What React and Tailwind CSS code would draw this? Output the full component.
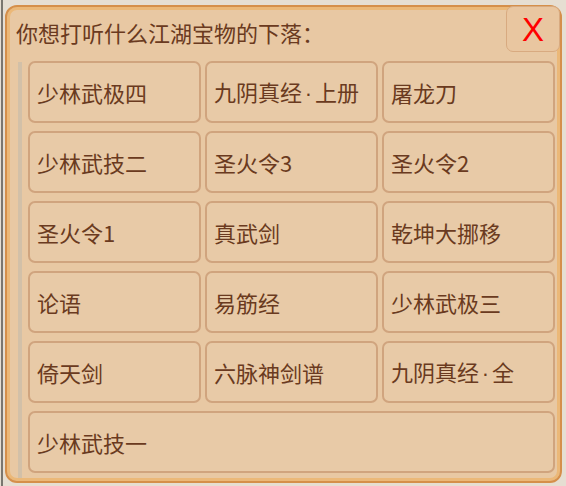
import React from "react";

const items = [
  "少林武极四", ["九阴真经", "上册"], "屠龙刀",
  "少林武技二", "圣火令3", "圣火令2",
  "圣火令1", "真武剑", "乾坤大挪移",
  "论语", "易筋经", "少林武极三",
  "倚天剑", "六脉神剑谱", ["九阴真经", "全"],
];

function Label({ value }) {
  if (!Array.isArray(value)) return value;
  return (
    <>
      {value[0]}
      <span className="inline-block w-[13px] text-center font-['Liberation_Sans',Arial,sans-serif]">
        ·
      </span>
      {value[1]}
    </>
  );
}

function Item({ label, wide }) {
  return (
    <button
      className={
        "h-[62px] rounded-[7px] border-2 border-[#d0a47e] bg-[#e8caa7] pl-[7px] text-left text-[22px] leading-none text-[#6a3a20] " +
        (wide ? "col-span-3" : "")
      }
    >
      <Label value={label} />
    </button>
  );
}

export default function App() {
  return (
    <div
      className="flex h-[486px] w-[566px] overflow-hidden bg-[#e6ded2]"
      style={{ fontFamily: '"Noto Sans CJK SC", "Noto Sans", sans-serif' }}
    >
      <div className="ml-[1px] w-[2px] shrink-0 bg-[#7a766f]" />
      <div className="ml-[2px] mt-[5px] h-[478px] w-[557px] shrink-0">
        <div className="relative flex h-full flex-col rounded-[12px] border-2 border-[#d58f4a] bg-[#e8c8a3] pl-[9px] pr-[5px] pt-[10px] shadow-[inset_0_0_0_3px_#ebb878]">
          <div className="h-[30px] text-[22px] leading-[30px] text-[#6a3a20]">
            你想打听什么江湖宝物的下落：
          </div>
          <div className="mt-[14px] flex h-[417px] gap-[6px]">
            <div className="ml-[2px] mt-[1px] w-[4px] shrink-0 bg-[#d2c0a8]" />
            <div className="grid h-[412px] w-[527px] grid-cols-3 grid-rows-6 gap-x-[4px] gap-y-[8px]">
              {items.map((t, i) => (
                <Item key={i} label={t} />
              ))}
              <Item label="少林武技一" wide />
            </div>
          </div>
          <div className="absolute right-0 top-[-1px] flex h-[46px] w-[54px] items-center justify-center rounded-[7px] border border-[#d8aa80] bg-[#e9c6a0]">
            <span
              className="text-[33px] leading-none text-[#ff0000]"
              style={{ fontFamily: '"Liberation Sans", Arial, sans-serif' }}
            >
              X
            </span>
          </div>
        </div>
      </div>
    </div>
  );
}
